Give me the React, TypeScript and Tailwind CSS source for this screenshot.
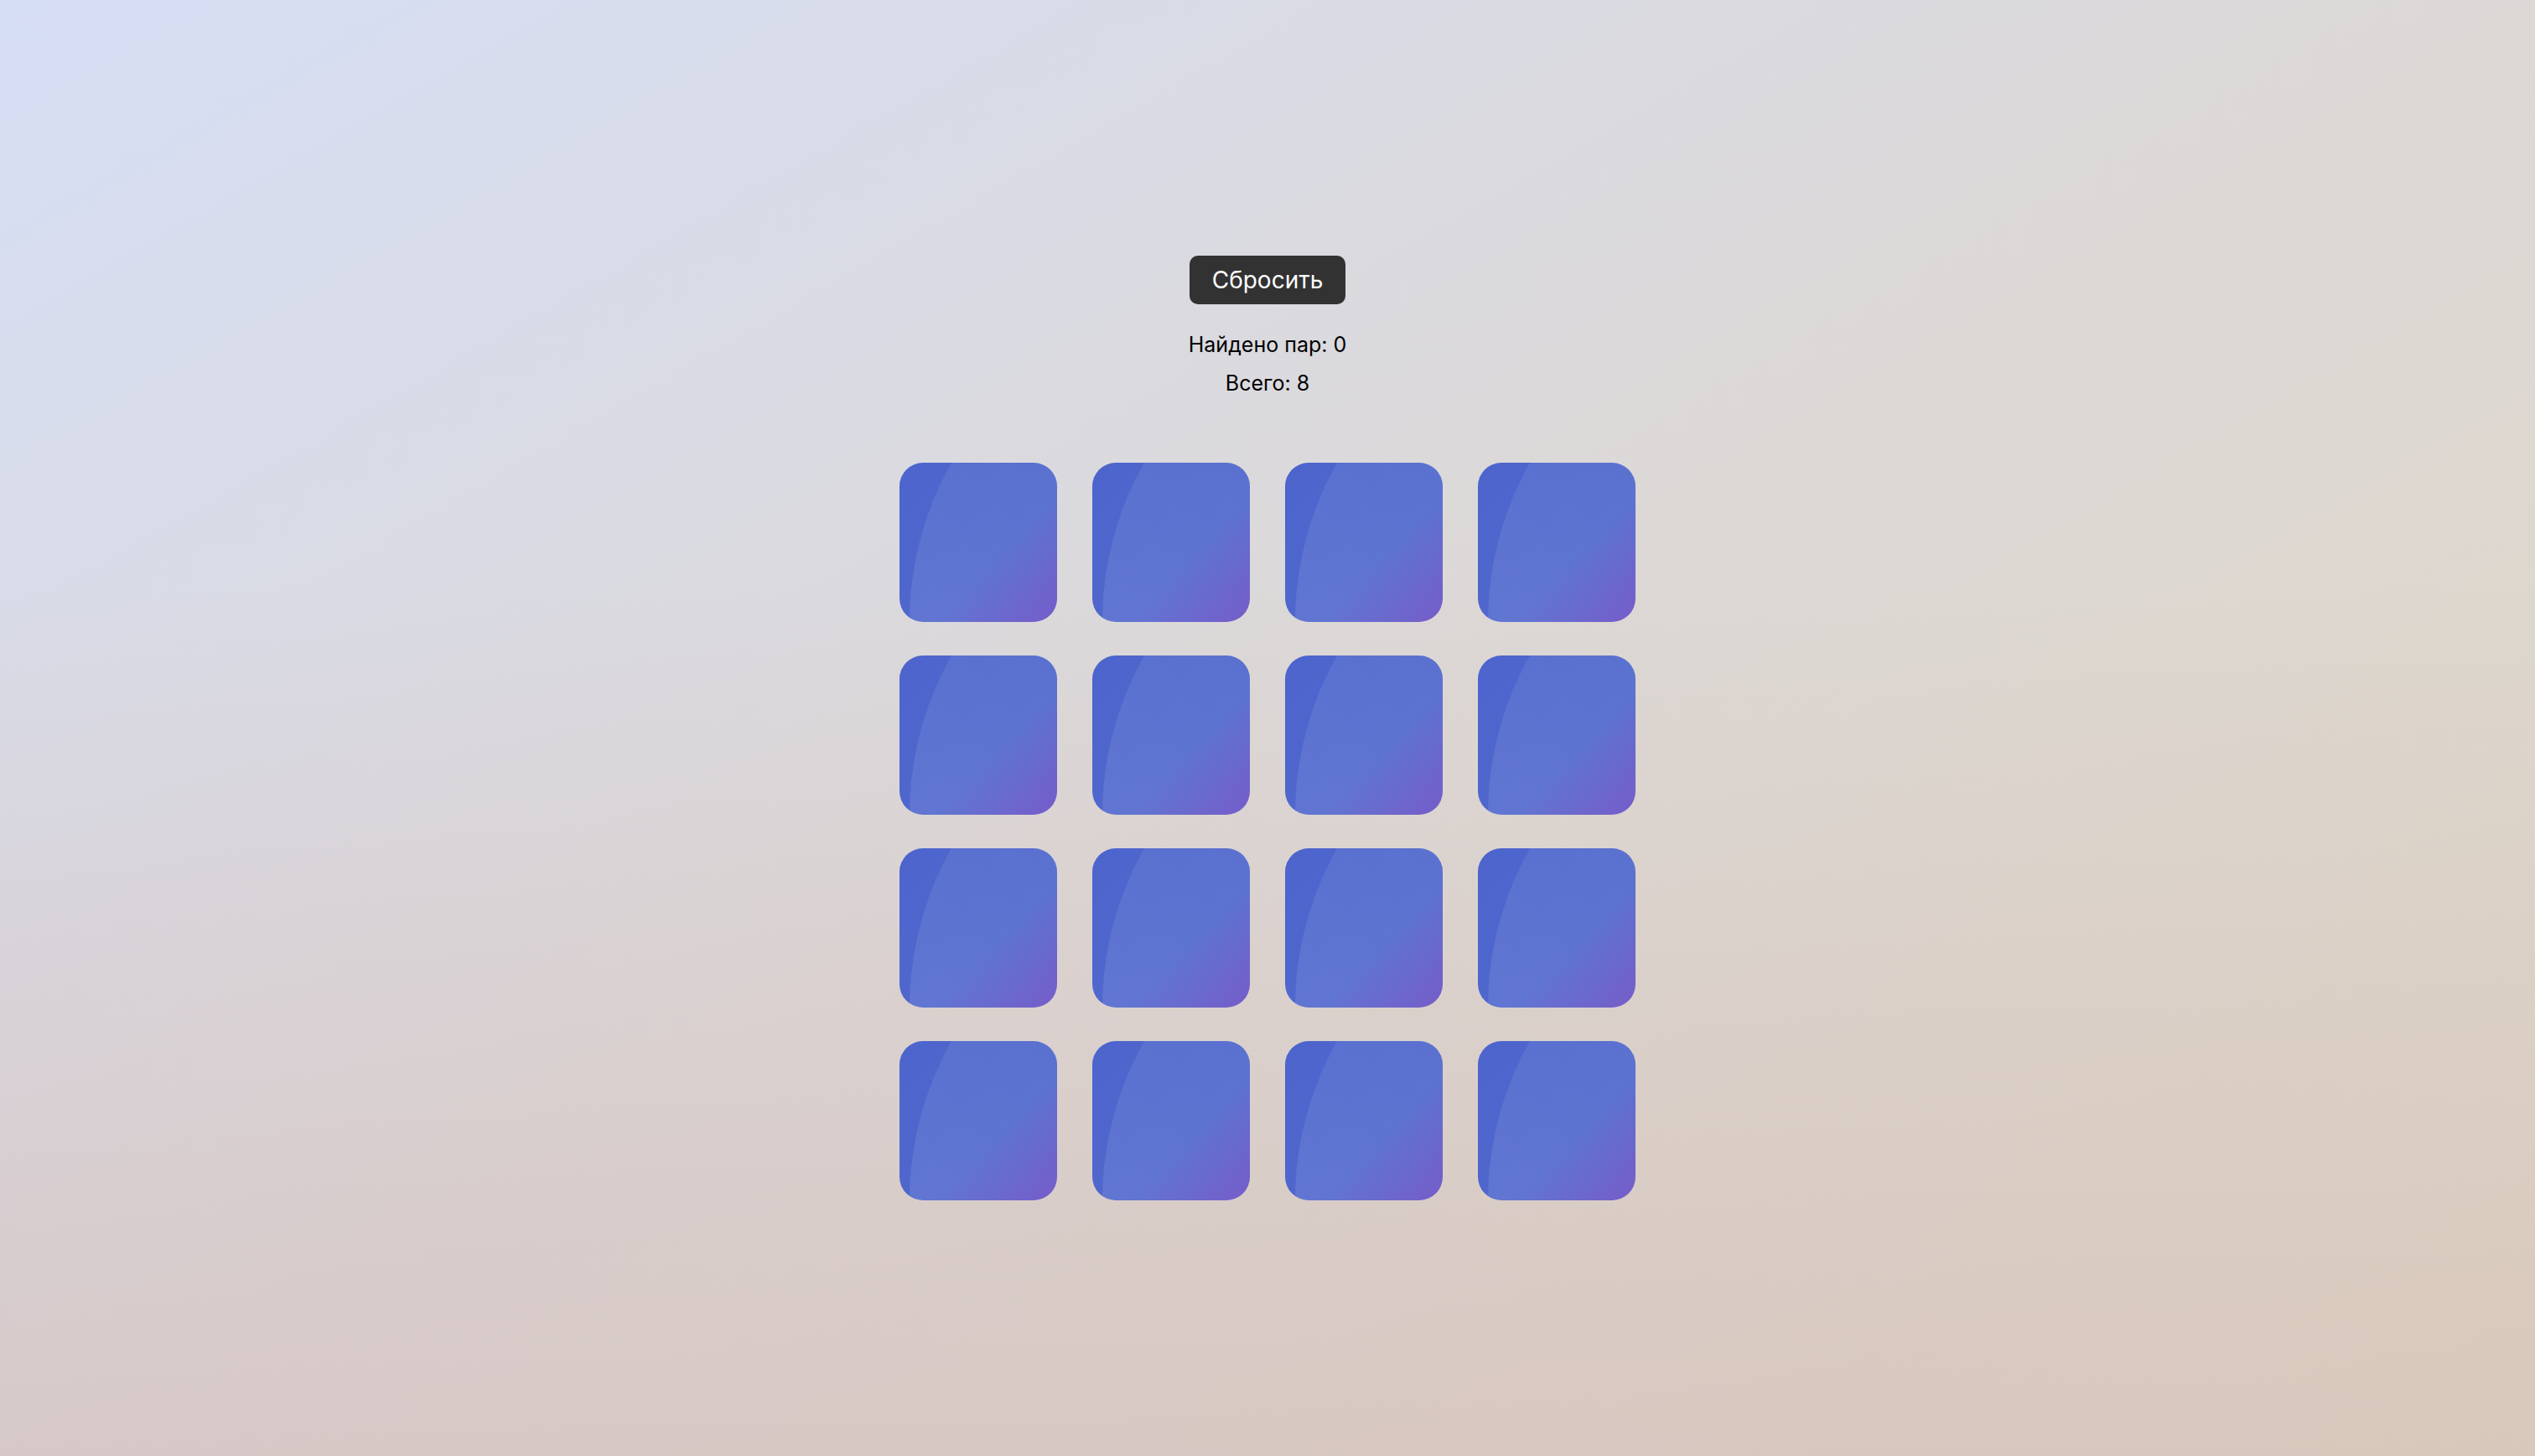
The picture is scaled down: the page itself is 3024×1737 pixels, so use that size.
import React from 'react'

const cards = Array.from({ length: 16 }, (_, i) => i)

function Card() {
  return (
    <div className="relative w-[188px] h-[190px] overflow-hidden rounded-[28px] bg-[linear-gradient(135deg,#4c64cc_0%,#5068cd_60%,#6a4ec4_100%)]">
      <div className="absolute left-[12px] top-[-196px] w-[772px] h-[772px] rounded-full bg-[linear-gradient(45deg,rgba(255,255,255,0.13)_0%,rgba(255,255,255,0.05)_60%)]" />
    </div>
  )
}

export default function App() {
  return (
    <main className="min-h-screen w-full flex flex-col items-center justify-center bg-[linear-gradient(to_bottom,rgba(205,172,175,0)_40%,rgba(205,172,175,0.35)_100%),linear-gradient(to_bottom_right,#d6def5_0%,#dcd8d6_50%,#dfd6c2_100%)] font-['Inter','Noto_Sans',sans-serif] text-black">
      <button className="h-[58px] px-[27px] rounded-[10px] bg-[#323232] text-white text-[28px] leading-none">
        Сбросить
      </button>
      <div className="mt-[30px] flex flex-col items-center gap-[10px] text-[25px] leading-[36px]">
        <p>Найдено пар: 0</p>
        <p>Всего: 8</p>
      </div>
      <div className="mt-[77px] grid grid-cols-4 gap-x-[42px] gap-y-[40px]">
        {cards.map((c) => (
          <Card key={c} />
        ))}
      </div>
    </main>
  )
}
